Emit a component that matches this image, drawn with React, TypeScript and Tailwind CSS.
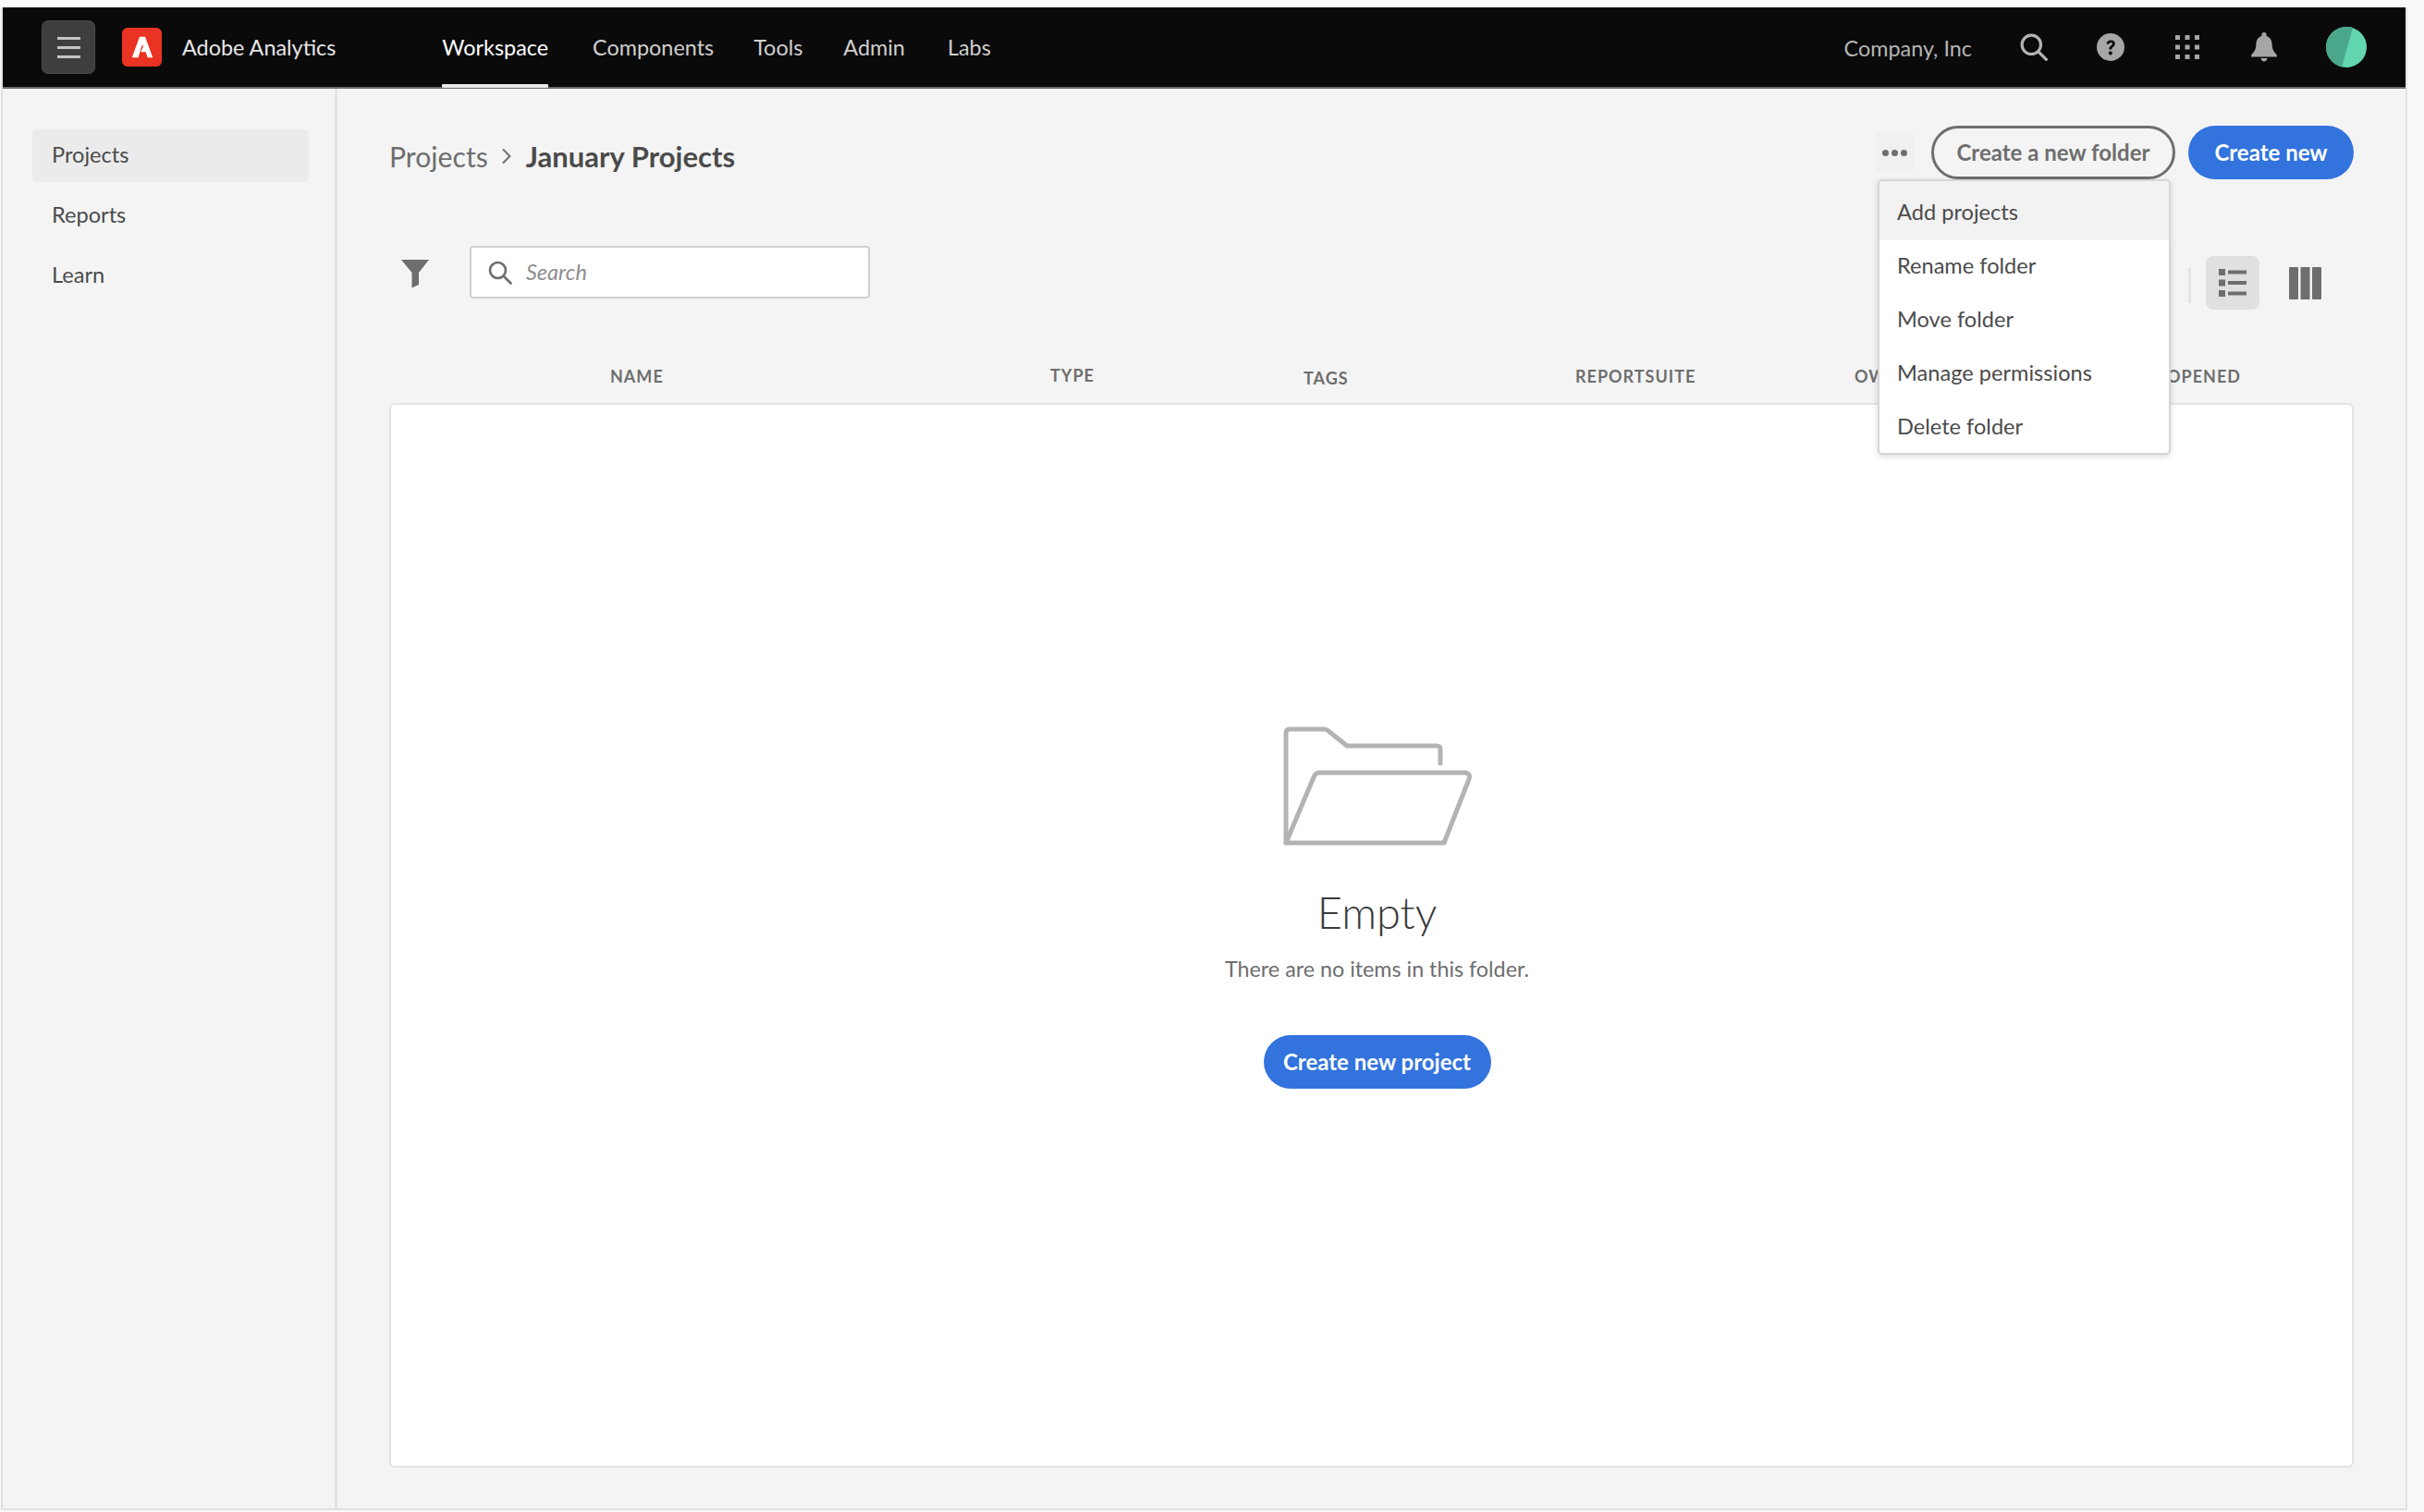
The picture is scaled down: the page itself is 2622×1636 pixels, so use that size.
import React from "react";

function Logo() {
  return (
    <div className="flex h-[42px] w-[43px] items-center justify-center rounded-[6px] bg-[#eb3323]">
      <svg viewBox="0 0 24 24" className="h-[30px] w-[30px]" fill="#fff">
        <path d="M9.6 3H14.4L21 21H16.5L14.9 16.2H10.6L12.7 11.6L12 9.4L8.4 21H3Z" />
      </svg>
    </div>
  );
}

function NavLink({ label, active, className = "" }: { label: string; active?: boolean; className?: string }) {
  return (
    <div className={`relative flex h-full items-center pt-[2px] ${className}`}>
      <span className={`text-[23.4px] leading-none ${active ? "text-white" : "text-[#cfcfcf]"}`}>{label}</span>
      {active && <div className="absolute bottom-[-1px] left-0 right-0 h-[4px] rounded-[1px] bg-[#e8e8e8]" />}
    </div>
  );
}

function MenuItem({ label, active }: { label: string; active?: boolean }) {
  return (
    <div className={`flex items-center pl-[19px] text-[23.6px] text-[#4b4b4b] ${active ? "h-[64px] rounded-t-[4px] bg-[#f2f2f2] pt-[4px]" : "h-[58px] pb-[3px]"}`}>
      {label}
    </div>
  );
}

export default function App() {
  return (
    <div className="min-h-[1636px] w-full bg-[#fafafa] pt-[8px] pl-px font-['Lato','Liberation_Sans',sans-serif]">
      <div className="flex h-[1626px] w-[2603px] flex-col border-b-2 border-l-2 border-r-2 border-[#e1e1e1] bg-[#f4f4f4]">
        {/* Top bar */}
        <header className="flex h-[88px] shrink-0 items-center border-b-2 border-[#6a6a6a] bg-[#0a0a0a] pr-[42px]">
          <button className="ml-[42px] flex h-[58px] w-[58px] flex-col items-center justify-center gap-[7px] rounded-[7px] border border-[#4a4a4a] bg-[#3e3e3e]">
            <span className="h-[3px] w-[25px] bg-[#c4c4c4]" />
            <span className="h-[3px] w-[25px] bg-[#c4c4c4]" />
            <span className="h-[3px] w-[25px] bg-[#c4c4c4]" />
          </button>
          <div className="ml-[29px]"><Logo /></div>
          <span className="ml-[22px] mt-[2px] text-[23.4px] leading-none text-[#e6e6e6]">Adobe Analytics</span>
          <nav className="ml-[115px] flex h-full">
            <NavLink label="Workspace" active />
            <NavLink label="Components" className="ml-[48px]" />
            <NavLink label="Tools" className="ml-[43px]" />
            <NavLink label="Admin" className="ml-[44px]" />
            <NavLink label="Labs" className="ml-[46px]" />
          </nav>
          <div className="ml-auto flex items-center">
            <span className="mt-[4px] text-[23.4px] leading-none text-[#b5b5b5]">Company, Inc</span>
            <svg viewBox="0 0 28 28" className="ml-[52px] h-[30px] w-[30px]" fill="none" stroke="#b3b3b3" strokeWidth="3" strokeLinecap="round">
              <circle cx="11.5" cy="11.5" r="9.5" />
              <path d="M18.5 18.5L26.5 26.5" />
            </svg>
            <svg viewBox="0 0 30 30" className="ml-[53px] h-[30px] w-[30px]">
              <circle cx="15" cy="15" r="15" fill="#a6a6a6" />
              <path d="M10.5 11.5C10.8 8.8 12.7 7.4 15.2 7.4C18 7.4 19.8 9 19.8 11.3C19.8 13 18.9 14 17.6 15C16.6 15.8 16.3 16.3 16.3 17.6H13.4C13.3 15.6 13.9 14.6 15.3 13.5C16.3 12.7 16.8 12.2 16.8 11.4C16.8 10.5 16.2 10 15.2 10C14.2 10 13.6 10.6 13.4 11.8Z" fill="#0a0a0a" />
              <circle cx="14.9" cy="21.4" r="2" fill="#0a0a0a" />
            </svg>
            <svg viewBox="0 0 28 28" className="ml-[54px] h-[28px] w-[28px]" fill="#a6a6a6">
              {[1, 11.5, 22].map((y) =>
                [1, 11.5, 22].map((x) => <rect key={`${x}-${y}`} x={x} y={y} width="5" height="5" />)
              )}
            </svg>
            <svg viewBox="0 0 28 32" className="ml-[55px] h-[32px] w-[28px]" fill="#a6a6a6">
              <path d="M14 0C12.4 0 11.4 1 11.4 2.6V4C7.2 5.4 5.6 8.6 5.4 13C5.2 17.8 4 20.8 1 23.4C0.4 24 0 24.6 0 25.4V26.5H28V25.4C28 24.6 27.6 24 27 23.4C24 20.8 22.8 17.8 22.6 13C22.4 8.6 20.8 5.4 16.6 4V2.6C16.6 1 15.6 0 14 0Z" />
              <path d="M10.5 28H17.5C17.2 30.2 15.8 31.6 14 31.6C12.2 31.6 10.8 30.2 10.5 28Z" />
            </svg>
            <svg viewBox="0 0 44 44" className="ml-[53px] h-[44px] w-[44px]">
              <circle cx="22" cy="22" r="22" fill="#62d6b0" />
              <path d="M29 0.9 A22 22 0 0 0 22 0 A22 22 0 0 0 17 43.4Z" fill="#4aa78c" />
            </svg>
          </div>
        </header>

        {/* Body */}
        <div className="flex min-h-0 flex-1">
          <aside className="w-[362px] shrink-0 border-r-[3px] border-[#e3e3e3] pl-[32px] pr-[28px] pt-[44px]">
            <div className="flex h-[57px] items-center rounded-[5px] bg-[#ebebeb] pb-[2px] pl-[21px] text-[23.6px] text-[#4b4b4b]">Projects</div>
            <div className="mt-[8px] flex h-[57px] items-center pb-[2px] pl-[21px] text-[23.6px] text-[#4b4b4b]">Reports</div>
            <div className="mt-[8px] flex h-[57px] items-center pb-[2px] pl-[21px] text-[23.6px] text-[#4b4b4b]">Learn</div>
          </aside>

          <main className="relative min-w-0 flex-1 pl-[56px] pr-[56px] pt-[40px]">
            {/* Title row */}
            <div className="flex h-[58px] items-center">
              <div className="mt-[8px] flex items-center">
                <span className="text-[30.2px] leading-none text-[#6e6e6e]">Projects</span>
                <svg viewBox="0 0 12 18" className="ml-[14px] h-[18px] w-[12px]" fill="none" stroke="#6e6e6e" strokeWidth="2" strokeLinecap="round" strokeLinejoin="round">
                  <path d="M2.5 2L9.5 9L2.5 16" />
                </svg>
                <span className="ml-[15px] text-[31px] font-bold leading-none text-[#4b4b4b]">January Projects</span>
              </div>
              <div className="ml-auto flex items-center">
                <div className="flex h-[44px] w-[41px] items-center justify-center gap-[3px] rounded-[4px] bg-[#f0f0f0]">
                  <span className="h-[7px] w-[7px] rounded-full bg-[#6e6e6e]" />
                  <span className="h-[7px] w-[7px] rounded-full bg-[#6e6e6e]" />
                  <span className="h-[7px] w-[7px] rounded-full bg-[#6e6e6e]" />
                </div>
                <button className="ml-[19px] flex h-[58px] w-[264px] items-center justify-center rounded-full border-[3px] border-[#6e6e6e] pb-[1px] text-[24px] font-bold text-[#6e6e6e]">Create a new folder</button>
                <button className="ml-[14px] flex h-[58px] w-[179px] items-center justify-center rounded-full bg-[#3273de] pb-[1px] text-[24px] font-bold text-white">Create new</button>
              </div>
            </div>

            {/* Toolbar */}
            <div className="mt-[72px] flex h-[69px] items-start">
              <svg viewBox="0 0 30 32" className="ml-[13px] mt-[14px] h-[32px] w-[30px]" fill="#6e6e6e">
                <path d="M0 1H30L19 15V28L11.5 31.5V15Z" />
              </svg>
              <div className="ml-[44px] flex h-[57px] w-[433px] items-center rounded-[4px] border-2 border-[#cfcfcf] bg-white pl-[18px]">
                <svg viewBox="0 0 26 26" className="h-[26px] w-[26px]" fill="none" stroke="#6e6e6e" strokeWidth="2.6" strokeLinecap="round">
                  <circle cx="10.5" cy="10.5" r="8.5" />
                  <path d="M17 17L24.5 24.5" />
                </svg>
                <span className="ml-[15px] mt-[1px] text-[23.5px] italic text-[#8e8e8e]">Search</span>
              </div>
              <div className="ml-auto flex items-start pr-[35px]">
                <div className="mt-[24px] h-[38px] w-[3px] bg-[#e3e3e3]" />
                <div className="ml-[16px] mt-[11px] flex h-[58px] w-[58px] items-center justify-center rounded-[8px] bg-[#e0e0e0]">
                  <svg viewBox="0 0 30 30" className="h-[30px] w-[30px]" fill="#6e6e6e">
                    <rect x="0" y="0" width="7" height="7" /><rect x="10" y="1.5" width="20" height="4" />
                    <rect x="0" y="11.5" width="7" height="7" /><rect x="10" y="13" width="20" height="4" />
                    <rect x="0" y="23" width="7" height="7" /><rect x="10" y="24.5" width="20" height="4" />
                  </svg>
                </div>
                <svg viewBox="0 0 35 35" className="ml-[32px] mt-[23px] h-[35px] w-[35px]" fill="#6e6e6e">
                  <rect x="0" y="0" width="10" height="35" rx="1" />
                  <rect x="12.5" y="0" width="10" height="35" />
                  <rect x="25" y="0" width="10" height="35" rx="1" />
                </svg>
              </div>
            </div>

            {/* Column headers */}
            <div className="mb-[8px] mt-[52px] grid h-[41px] grid-cols-[476px_274px_294px_302px_1fr] items-center pl-[239px] pr-[122px] text-[18px] font-bold tracking-[1px] text-[#6e6e6e]">
              <span>NAME</span>
              <span className="mb-[3px]">TYPE</span>
              <span className="mt-[3px]">TAGS</span>
              <span>REPORTSUITE</span>
              <div className="flex justify-between">
                <span>OWNER</span>
                <span>LAST OPENED</span>
              </div>
            </div>

            {/* Card */}
            <div className="flex h-[1152px] flex-col items-center rounded-[6px] border-2 border-[#e3e3e3] bg-white pl-[12px] pt-[345px]">
              <svg viewBox="105 22 210 135" className="h-[135px] w-[210px]" fill="none" stroke="#b3b3b3" strokeWidth="5" strokeLinejoin="round" strokeLinecap="round">
                <path d="M278 65V50Q278 46 274 46H177L157 30Q155 28 152 28H115Q111 28 111 32V151" />
                <path d="M111 151L141 80Q143 75 147 75H305Q311 76 309 82L282 151Z" />
              </svg>
              <div className="mt-[39px] text-[47px] font-light leading-[60px] text-[#3a3a3a]">Empty</div>
              <div className="mt-[15px] text-[23.3px] leading-[32px] text-[#6e6e6e]">There are no items in this folder.</div>
              <button className="mt-[56px] flex h-[58px] w-[246px] items-center justify-center rounded-full bg-[#3273de] text-[24px] font-bold text-white">Create new project</button>
            </div>

            {/* Dropdown menu */}
            <div className="absolute right-[254px] top-[98px] h-[298px] w-[317px] overflow-hidden rounded-[5px] border-2 border-[#d6d6d6] bg-white shadow-[0_2px_6px_rgba(0,0,0,0.15)]">
              <MenuItem label="Add projects" active />
              <MenuItem label="Rename folder" />
              <MenuItem label="Move folder" />
              <MenuItem label="Manage permissions" />
              <MenuItem label="Delete folder" />
            </div>
          </main>
        </div>
      </div>
    </div>
  );
}
